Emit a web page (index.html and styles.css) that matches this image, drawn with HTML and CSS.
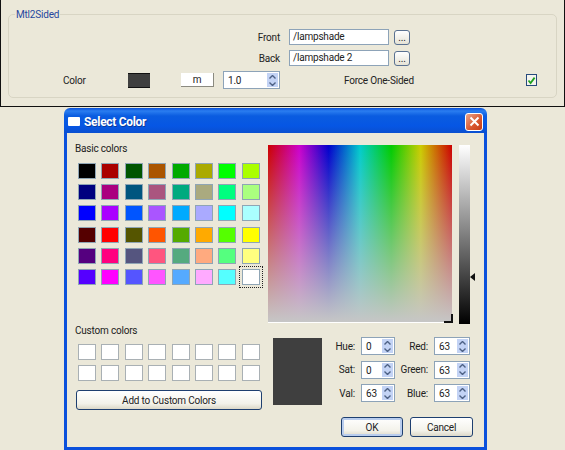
FILE: index.html
```html
<!DOCTYPE html>
<html lang="en">
<head>
<meta charset="utf-8">
<title>Select Color</title>
<link rel="stylesheet" href="styles.css">
</head>
<body>
<svg class="defs" width="0" height="0" aria-hidden="true">
  <symbol id="up" viewBox="0 0 7 4"><path d="M0.5 3.5 L3.5 0.5 L6.5 3.5" fill="none" stroke="#4d6185" stroke-width="1.4"/></symbol>
  <symbol id="down" viewBox="0 0 7 4"><path d="M0.5 0.5 L3.5 3.5 L6.5 0.5" fill="none" stroke="#4d6185" stroke-width="1.4"/></symbol>
</svg>
<section class="panel">
  <fieldset class="group">
    <legend>Mtl2Sided</legend>
    <div class="file-row first">
      <label class="file-label">Front</label>
      <div class="text-field">/lampshade</div>
      <button class="dots">...</button>
    </div>
    <div class="file-row">
      <label class="file-label">Back</label>
      <div class="text-field">/lampshade 2</div>
      <button class="dots">...</button>
    </div>
    <div class="color-row">
      <span class="color-label">Color</span>
      <span class="color-chip"></span>
      <button class="m-btn">m</button>
      <div class="spin spin-mult">
        <span class="spin-val">1.0</span>
        <span class="spin-btns"><i><svg width="7" height="4"><use href="#up"/></svg></i><i><svg width="7" height="4"><use href="#down"/></svg></i></span>
      </div>
      <span class="force-label">Force One-Sided</span>
      <span class="check">
        <svg width="9" height="9" viewBox="0 0 9 9"><path d="M1.5 4.5 L3.6 7 L7.6 1.6" fill="none" stroke="#21a121" stroke-width="1.8"/></svg>
      </span>
    </div>
  </fieldset>
</section>

<section class="dialog">
  <header class="titlebar">
    <span class="title-icon"></span>
    <span class="title-text">Select Color</span>
    <span class="close">
      <svg width="11" height="11" viewBox="0 0 11 11"><path d="M1.5 1.5 L9.5 9.5 M9.5 1.5 L1.5 9.5" stroke="#fff" stroke-width="2"/></svg>
    </span>
  </header>
  <div class="client">
    <div class="left">
      <div class="heading basic-heading">Basic colors</div>
      <div class="swatches basic">
        <span class="sw c000000"></span><span class="sw caa0000"></span><span class="sw c005500"></span><span class="sw caa5500"></span><span class="sw c00aa00"></span><span class="sw caaaa00"></span><span class="sw c00ff00"></span><span class="sw caaff00"></span>
        <span class="sw c00007f"></span><span class="sw caa007f"></span><span class="sw c00557f"></span><span class="sw caa557f"></span><span class="sw c00aa7f"></span><span class="sw caaaa7f"></span><span class="sw c00ff7f"></span><span class="sw caaff7f"></span>
        <span class="sw c0000ff"></span><span class="sw caa00ff"></span><span class="sw c0055ff"></span><span class="sw caa55ff"></span><span class="sw c00aaff"></span><span class="sw caaaaff"></span><span class="sw c00ffff"></span><span class="sw caaffff"></span>
        <span class="sw c550000"></span><span class="sw cff0000"></span><span class="sw c555500"></span><span class="sw cff5500"></span><span class="sw c55aa00"></span><span class="sw cffaa00"></span><span class="sw c55ff00"></span><span class="sw cffff00"></span>
        <span class="sw c55007f"></span><span class="sw cff007f"></span><span class="sw c55557f"></span><span class="sw cff557f"></span><span class="sw c55aa7f"></span><span class="sw cffaa7f"></span><span class="sw c55ff7f"></span><span class="sw cffff7f"></span>
        <span class="sw c5500ff"></span><span class="sw cff00ff"></span><span class="sw c5555ff"></span><span class="sw cff55ff"></span><span class="sw c55aaff"></span><span class="sw cffaaff"></span><span class="sw c55ffff"></span><span class="sw cffffff selected"></span>
      </div>
      <div class="heading custom-heading">Custom colors</div>
      <div class="swatches custom">
        <span class="sw cffffff"></span><span class="sw cffffff"></span><span class="sw cffffff"></span><span class="sw cffffff"></span><span class="sw cffffff"></span><span class="sw cffffff"></span><span class="sw cffffff"></span><span class="sw cffffff"></span>
        <span class="sw cffffff"></span><span class="sw cffffff"></span><span class="sw cffffff"></span><span class="sw cffffff"></span><span class="sw cffffff"></span><span class="sw cffffff"></span><span class="sw cffffff"></span><span class="sw cffffff"></span>
      </div>
      <button class="xp-btn add-btn">Add to Custom Colors</button>
    </div>
    <div class="right">
      <div class="picker">
        <div class="spectrum"><span class="crosshair"></span></div>
        <div class="value-bar"></div>
        <span class="value-arrow"></span>
      </div>
      <div class="readout">
        <div class="preview"></div>
        <div class="fields">
          <label>Hue:</label>
          <div class="spin"><span class="spin-val">0</span><span class="spin-btns"><i><svg width="7" height="4"><use href="#up"/></svg></i><i><svg width="7" height="4"><use href="#down"/></svg></i></span></div>
          <label>Red:</label>
          <div class="spin"><span class="spin-val">63</span><span class="spin-btns"><i><svg width="7" height="4"><use href="#up"/></svg></i><i><svg width="7" height="4"><use href="#down"/></svg></i></span></div>
          <label>Sat:</label>
          <div class="spin"><span class="spin-val">0</span><span class="spin-btns"><i><svg width="7" height="4"><use href="#up"/></svg></i><i><svg width="7" height="4"><use href="#down"/></svg></i></span></div>
          <label>Green:</label>
          <div class="spin"><span class="spin-val">63</span><span class="spin-btns"><i><svg width="7" height="4"><use href="#up"/></svg></i><i><svg width="7" height="4"><use href="#down"/></svg></i></span></div>
          <label>Val:</label>
          <div class="spin"><span class="spin-val">63</span><span class="spin-btns"><i><svg width="7" height="4"><use href="#up"/></svg></i><i><svg width="7" height="4"><use href="#down"/></svg></i></span></div>
          <label>Blue:</label>
          <div class="spin"><span class="spin-val">63</span><span class="spin-btns"><i><svg width="7" height="4"><use href="#up"/></svg></i><i><svg width="7" height="4"><use href="#down"/></svg></i></span></div>
        </div>
      </div>
      <div class="actions">
        <button class="xp-btn ok-btn">OK</button>
        <button class="xp-btn cancel-btn">Cancel</button>
      </div>
    </div>
  </div>
</section>
</body>
</html>
```
FILE: styles.css
```css
* { box-sizing: border-box; }
html, body { margin: 0; height: 450px; overflow: hidden; }
body {
  background: #ebe8d9;
  color: #222;
  font: 10px/13px Roboto, "Liberation Sans", Arial, sans-serif;
  letter-spacing: -0.2px;
}
button { font: inherit; letter-spacing: inherit; color: inherit; padding: 0; }
.defs { position: absolute; }

/* Top material panel */
.panel {
  height: 107px;
  border: 1px solid #111;
  border-top: 0;
  padding: 8px 7px 0 7px;
  background: #ebe8d9;
}
.group {
  height: 90px;
  margin: 0;
  padding: 0;
  border: 1px solid #d8d5c4;
  border-radius: 5px;
}
.group legend {
  margin-left: 6px;
  padding: 0 1px;
  color: #27479e;
  line-height: 13px;
}
.file-row { display: flex; align-items: center; height: 16px; margin-top: 5px; }
.file-row.first { margin-top: 8px; }
.file-label { width: 271px; text-align: right; margin-right: 9px; }
.text-field {
  width: 100px; height: 16px;
  padding-left: 3px;
  background: #fff;
  border: 1px solid #8da3b8;
  line-height: 14px;
}
.dots {
  width: 16px; height: 15px;
  margin-left: 5px;
  background: linear-gradient(#fff, #e6e3d6);
  border: 1px solid #5a7191;
  border-radius: 3px;
  line-height: 11px;
}
.color-row { display: flex; align-items: center; height: 18px; margin-top: 5px; padding-left: 54px; }
.color-label { width: 65px; }
.color-chip {
  width: 22px; height: 15px;
  background: #3f3f3f;
  border-bottom: 1px solid #111;
  border-top: 1px solid #111;
}
.m-btn {
  width: 33px; height: 14px;
  margin-left: 31px;
  background: #fff;
  border: 0;
  border-right: 1px solid #8b8a80;
  border-bottom: 1px solid #8b8a80;
  line-height: 13px;
}
.spin-mult { width: 57px !important; margin-left: 9px; }
.force-label { width: 182px; margin-left: 64px; }
.check {
  display: flex; align-items: center; justify-content: center;
  width: 11px; height: 12px;
  background: #f4f4ee;
  border: 1px solid #27497c;
}

/* Spin box */
.spin {
  display: flex;
  width: 34px; height: 18px;
  padding: 1px;
  background: #fff;
  border: 1px solid #8da3b8;
}
.spin-val { flex: 1; padding-left: 3px; line-height: 15px; }
.spin-btns { display: flex; flex-direction: column; width: 11px; gap: 0; }
.spin-btns i {
  flex: 1;
  display: flex; align-items: center; justify-content: center;
  background: #c3d3f5;
}

/* Select Color dialog */
.dialog {
  width: 423px; height: 342px;
  margin: 1px 0 0 64px;
  display: flex;
  flex-direction: column;
}
.titlebar {
  height: 25px;
  flex: none;
  display: flex;
  align-items: center;
  padding: 2px 4px 0 4px;
  border-radius: 6px 6px 0 0;
  background: linear-gradient(#0a50d8 0, #2a7df0 3px, #0a5ce0 8px, #0656e4 18px, #0a4fd0 25px);
}
.title-icon { width: 12px; height: 9px; background: #fff; border-radius: 1px; }
.title-text {
  margin-left: 4px;
  color: #fff;
  font: bold 12px/14px Roboto, "Liberation Sans", sans-serif;
  letter-spacing: -0.3px;
  text-shadow: 1px 1px 0 #0a3a9c;
  flex: 1;
}
.close {
  display: flex; align-items: center; justify-content: center;
  width: 18px; height: 18px;
  background: linear-gradient(135deg, #e9a58c, #d8562e 60%, #c63d18);
  border: 1px solid #fff;
  border-radius: 3px;
}
.client {
  flex: 1;
  display: flex;
  background: #ebe8d9;
  border: 3px solid #0a50dc;
  border-top: 0;
}
.left { width: 199px; padding-left: 8px; flex: none; }
.heading { line-height: 13px; }
.basic-heading { padding-top: 9px; }
.swatches {
  display: grid;
  grid-template-columns: repeat(8, 18px);
  grid-auto-rows: 16px;
  column-gap: 5.4px;
  row-gap: 5.2px;
  margin-left: 3px;
}
.basic { margin-top: 8px; }
.custom-heading { margin-top: 39px; }
.custom { margin-top: 7px; }
.sw { border: 1px solid #8fa5b5; }
.custom .sw { border-color: #a9b0b4; }
.selected { outline: 1px dotted #222; outline-offset: 2px; }
.xp-btn {
  background: linear-gradient(#fff, #f3f2ea 70%, #dcd8c8);
  border: 1px solid #1e3f70;
  border-radius: 3px;
}
.add-btn { display: block; width: 186px; height: 20px; margin: 9px 0 0 1px; }
.right { flex: 1; padding: 12px 0 0 2px; }
.picker { position: relative; display: flex; align-items: flex-start; gap: 7px; }
.spectrum {
  position: relative;
  width: 184px; height: 178px;
  background:
    linear-gradient(to bottom, rgba(198,198,198,0) 0%, rgba(198,198,198,1) 100%),
    linear-gradient(to right, #cc0000 0%, #cc00cc 17%, #0000cc 33%, #00cccc 50%, #00cc00 67%, #cccc00 83%, #cc0000 100%);
  border-bottom: 1px solid #fff;
}
.crosshair {
  position: absolute; right: -1px; bottom: -1px;
  width: 9px; height: 9px;
  border-right: 2px solid #111;
  border-bottom: 2px solid #111;
}
.value-bar { width: 11px; height: 179px; background: linear-gradient(#fff, #000); }
.value-arrow {
  position: absolute; left: 202px; top: 128px;
  border: 4px solid transparent;
  border-left: 0;
  border-right: 5px solid #111;
}
.readout { display: flex; margin-top: 14px; margin-left: 5px; }
.preview { width: 49px; height: 67px; background: #3f3f3f; flex: none; }
.fields {
  display: grid;
  grid-template-columns: 34px 34px 39px 36px;
  grid-auto-rows: 18px;
  row-gap: 5.5px;
  column-gap: 0;
  margin-left: 5px;
  margin-top: -1px;
  align-items: center;
}
.fields label { text-align: right; padding-right: 6px; }
.fields .spin { justify-self: start; }
.fields .spin:nth-child(4n) { width: 36px; }
.actions { display: flex; gap: 7px; margin: 12px 0 0 73px; }
.ok-btn { width: 62px; height: 20px; box-shadow: inset 0 0 0 2px #b9cdee; }
.cancel-btn { width: 63px; height: 20px; }

/* Palette */
.c000000 { background: #000000; } .caa0000 { background: #aa0000; } .c005500 { background: #005500; } .caa5500 { background: #aa5500; }
.c00aa00 { background: #00aa00; } .caaaa00 { background: #aaaa00; } .c00ff00 { background: #00ff00; } .caaff00 { background: #aaff00; }
.c00007f { background: #00007f; } .caa007f { background: #aa007f; } .c00557f { background: #00557f; } .caa557f { background: #aa557f; }
.c00aa7f { background: #00aa7f; } .caaaa7f { background: #aaaa7f; } .c00ff7f { background: #00ff7f; } .caaff7f { background: #aaff7f; }
.c0000ff { background: #0000ff; } .caa00ff { background: #aa00ff; } .c0055ff { background: #0055ff; } .caa55ff { background: #aa55ff; }
.c00aaff { background: #00aaff; } .caaaaff { background: #aaaaff; } .c00ffff { background: #00ffff; } .caaffff { background: #aaffff; }
.c550000 { background: #550000; } .cff0000 { background: #ff0000; } .c555500 { background: #555500; } .cff5500 { background: #ff5500; }
.c55aa00 { background: #55aa00; } .cffaa00 { background: #ffaa00; } .c55ff00 { background: #55ff00; } .cffff00 { background: #ffff00; }
.c55007f { background: #55007f; } .cff007f { background: #ff007f; } .c55557f { background: #55557f; } .cff557f { background: #ff557f; }
.c55aa7f { background: #55aa7f; } .cffaa7f { background: #ffaa7f; } .c55ff7f { background: #55ff7f; } .cffff7f { background: #ffff7f; }
.c5500ff { background: #5500ff; } .cff00ff { background: #ff00ff; } .c5555ff { background: #5555ff; } .cff55ff { background: #ff55ff; }
.c55aaff { background: #55aaff; } .cffaaff { background: #ffaaff; } .c55ffff { background: #55ffff; } .cffffff { background: #ffffff; }
```
